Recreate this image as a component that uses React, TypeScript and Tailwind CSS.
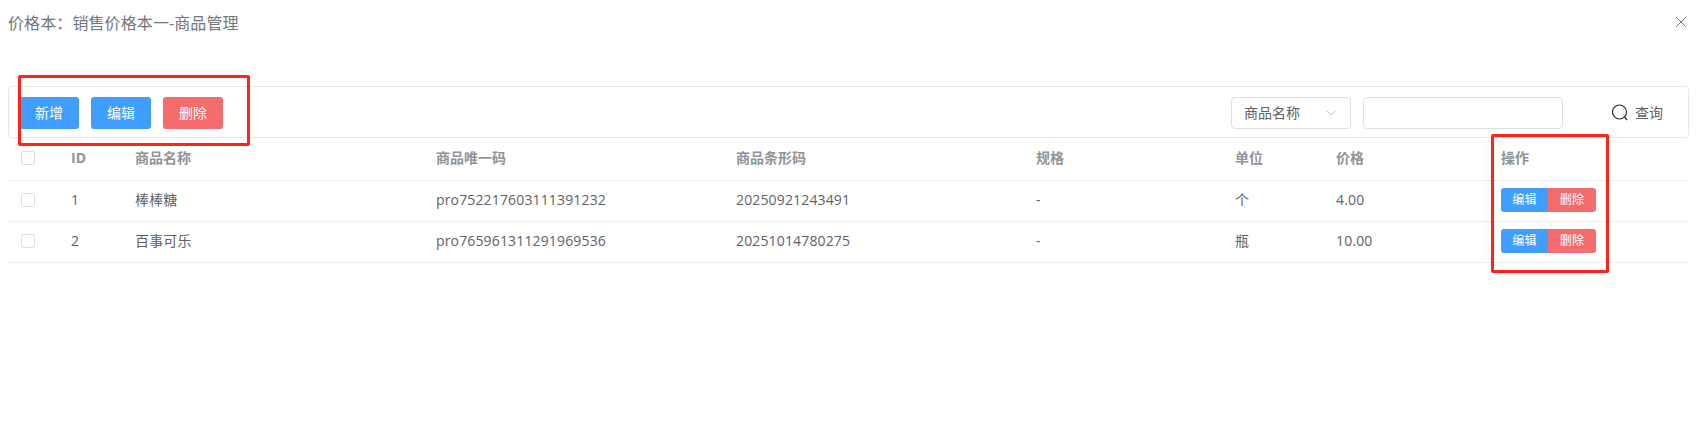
import { ChevronDown, X } from "lucide-react"

const rows = [
  { id: 1, name: "棒棒糖", code: "pro752217603111391232", barcode: "20250921243491", spec: "-", unit: "个", price: "4.00" },
  { id: 2, name: "百事可乐", code: "pro765961311291969536", barcode: "20251014780275", spec: "-", unit: "瓶", price: "10.00" },
]

function Checkbox() {
  return <span className="block h-[14px] w-[14px] rounded-[2px] border border-[#dcdfe6] bg-white" />
}

export default function App() {
  return (
    <div className="relative h-[447px] w-[1697px] overflow-hidden bg-white pl-2 pr-2 font-['Open_Sans','Noto_Sans_CJK_SC',sans-serif] text-[14px] text-[#606266]">
      {/* 标题 */}
      <div className="flex h-[86px] items-start justify-between">
        <span className="pt-[12px] text-[16px] leading-[22px] tracking-[0.1px] text-[#72767b]">价格本：销售价格本一-商品管理</span>
        <X className="mr-[-1px] mt-[13px] h-[18px] w-[18px] text-[#72767b]" strokeWidth={1.3} />
      </div>

      {/* 工具栏 */}
      <div className="flex h-[52px] items-center rounded-[4px] border border-[#e6e8ef] pl-[10px] pr-[25px]">
        <div className="flex gap-[12px] pt-[1px]">
          <button className="h-[32px] w-[60px] rounded-[3px] bg-[#409eff] text-[14px] text-white">新增</button>
          <button className="h-[32px] w-[60px] rounded-[3px] bg-[#409eff] text-[14px] text-white">编辑</button>
          <button className="h-[32px] w-[60px] rounded-[3px] bg-[#f56c6c] text-[14px] text-white">删除</button>
        </div>
        <div className="ml-auto flex items-center pt-[1px]">
          <div className="flex h-[32px] w-[120px] items-center justify-between rounded-[4px] border border-[#dcdfe6] pl-[12px] pr-[11px]">
            <span className="text-[14px] text-[#606266]">商品名称</span>
            <ChevronDown className="h-[16px] w-[16px] text-[#b4b7bd]" strokeWidth={1.2} />
          </div>
          <div className="ml-[12px] h-[32px] w-[200px] rounded-[4px] border border-[#dcdfe6]" />
          <div className="ml-[49px] flex items-center gap-[7px]">
            {/* 放大镜 */}
            <svg width="16" height="18" viewBox="0 0 16 18" fill="none" stroke="#1f2d3d" strokeWidth="1.2">
              <circle cx="7.5" cy="8" r="7" />
              <path d="M12.5 13l2.5 3" />
            </svg>
            <span className="text-[14px]">查询</span>
          </div>
        </div>
      </div>

      {/* 表格 */}
      <table className="w-[1681px] table-fixed border-collapse">
        <colgroup>
          <col className="w-[50px]" />
          <col className="w-[77px]" />
          <col className="w-[301px]" />
          <col className="w-[300px]" />
          <col className="w-[300px]" />
          <col className="w-[199px]" />
          <col className="w-[101px]" />
          <col className="w-[154px]" />
          <col />
        </colgroup>
        <thead>
          <tr className="h-[42px] border-b border-[#ebeef5] text-left text-[14px] font-bold text-[#909399]">
            <th className="pb-[2px] pl-[13px] font-bold"><Checkbox /></th>
            <th className="pb-[2px] pl-[13px] font-bold">ID</th>
            <th className="pb-[2px] font-bold">商品名称</th>
            <th className="pb-[2px] font-bold">商品唯一码</th>
            <th className="pb-[2px] font-bold">商品条形码</th>
            <th className="pb-[2px] font-bold">规格</th>
            <th className="pb-[2px] font-bold">单位</th>
            <th className="pb-[2px] font-bold">价格</th>
            <th className="pb-[2px] pl-[11px] font-bold">操作</th>
          </tr>
        </thead>
        <tbody>
          {rows.map((row) => (
            <tr key={row.id} className="h-[41px] border-b border-[#ebeef5] text-[14px] tracking-[0.15px]">
              <td className="pb-[2px] pl-[13px]"><Checkbox /></td>
              <td className="pb-[3px] pl-[13px]">{row.id}</td>
              <td className="pb-[3px]">{row.name}</td>
              <td className="pb-[3px]">{row.code}</td>
              <td className="pb-[3px]">{row.barcode}</td>
              <td className="pb-[3px]">{row.spec}</td>
              <td className="pb-[3px]">{row.unit}</td>
              <td className="pb-[3px]">{row.price}</td>
              <td className="pb-[1px] pl-[11px]">
                <div className="flex h-[24px] w-[95px] overflow-hidden rounded-[3px] text-[12px] text-white">
                  <span className="flex w-[47px] items-center justify-center bg-[#409eff]">编辑</span>
                  <span className="flex w-[48px] items-center justify-center bg-[#f56c6c]">删除</span>
                </div>
              </td>
            </tr>
          ))}
        </tbody>
      </table>

      {/* 右侧固定列阴影 */}
      <div className="absolute left-[1491px] top-[138px] h-[125px] w-[1px] shadow-[-2px_0_6px_rgba(0,0,0,0.12)]" />

      {/* 红色标注框 */}
      <div className="absolute left-[18px] top-[75px] h-[71px] w-[232px] rounded-[2px] border-[3px] border-[#ff2318]" />
      <div className="absolute left-[1491px] top-[134px] h-[139px] w-[118px] rounded-[2px] border-[3px] border-[#ff2318]" />
    </div>
  )
}
